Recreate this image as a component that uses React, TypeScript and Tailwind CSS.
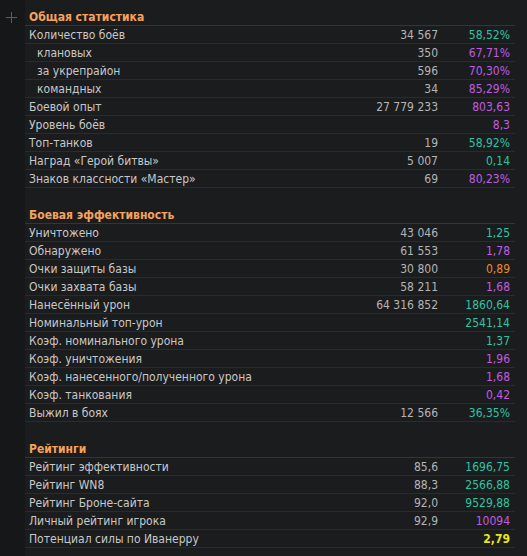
type Tone = "teal" | "purple" | "orange" | "yellow";

type Row = {
  label: string;
  value?: string;
  rate: string;
  tone: Tone;
  sub?: boolean;
};

type Section = {
  title: string;
  rows: Row[];
};

const sections: Section[] = [
  {
    title: "Общая статистика",
    rows: [
      { label: "Количество боёв", value: "34 567", rate: "58,52%", tone: "teal" },
      { label: "клановых", value: "350", rate: "67,71%", tone: "purple", sub: true },
      { label: "за укрепрайон", value: "596", rate: "70,30%", tone: "purple", sub: true },
      { label: "командных", value: "34", rate: "85,29%", tone: "purple", sub: true },
      { label: "Боевой опыт", value: "27 779 233", rate: "803,63", tone: "purple" },
      { label: "Уровень боёв", rate: "8,3", tone: "purple" },
      { label: "Топ-танков", value: "19", rate: "58,92%", tone: "teal" },
      { label: "Наград «Герой битвы»", value: "5 007", rate: "0,14", tone: "teal" },
      { label: "Знаков классности «Мастер»", value: "69", rate: "80,23%", tone: "purple" },
    ],
  },
  {
    title: "Боевая эффективность",
    rows: [
      { label: "Уничтожено", value: "43 046", rate: "1,25", tone: "teal" },
      { label: "Обнаружено", value: "61 553", rate: "1,78", tone: "purple" },
      { label: "Очки защиты базы", value: "30 800", rate: "0,89", tone: "orange" },
      { label: "Очки захвата базы", value: "58 211", rate: "1,68", tone: "purple" },
      { label: "Нанесённый урон", value: "64 316 852", rate: "1860,64", tone: "teal" },
      { label: "Номинальный топ-урон", rate: "2541,14", tone: "teal" },
      { label: "Коэф. номинального урона", rate: "1,37", tone: "teal" },
      { label: "Коэф. уничтожения", rate: "1,96", tone: "purple" },
      { label: "Коэф. нанесенного/полученного урона", rate: "1,68", tone: "purple" },
      { label: "Коэф. танкования", rate: "0,42", tone: "purple" },
      { label: "Выжил в боях", value: "12 566", rate: "36,35%", tone: "teal" },
    ],
  },
  {
    title: "Рейтинги",
    rows: [
      { label: "Рейтинг эффективности", value: "85,6", rate: "1696,75", tone: "teal" },
      { label: "Рейтинг WN8", value: "88,3", rate: "2566,88", tone: "teal" },
      { label: "Рейтинг Броне-сайта", value: "92,0", rate: "9529,88", tone: "teal" },
      { label: "Личный рейтинг игрока", value: "92,9", rate: "10094", tone: "purple" },
      { label: "Потенциал силы по Иванерру", rate: "2,79", tone: "yellow" },
    ],
  },
];

const toneClass: Record<Tone, string> = {
  teal: "text-[#2ec4a2]",
  purple: "text-[#c05ce0]",
  orange: "text-[#f08a24]",
  yellow: "text-[#e8e816] font-bold",
};

const StatRow = ({ row }: { row: Row }) => (
  <div className="grid h-[18px] grid-cols-[1fr_100px_72px] items-center border-b border-[#2a2b2e]">
    <span className={`truncate text-[#c8c8c8] ${row.sub ? "pl-3" : "pl-1"}`}>{row.label}</span>
    <span className="pr-[5px] text-right text-[#b4b4b4]">{row.value ?? ""}</span>
    <span className={`pr-[5px] text-right ${toneClass[row.tone]}`}>{row.rate}</span>
  </div>
);

export default function App() {
  return (
    <div
      className="flex min-h-[556px] w-[527px] bg-[#1b1c1e] text-[12px] leading-[18px]"
      style={{ fontFamily: '"DejaVu Sans Condensed", "DejaVu Sans", sans-serif' }}
    >
      <div className="w-[25px] shrink-0 bg-[#161719] pt-[8px]">
        <div className="flex h-[18px] items-center justify-center pr-[3px]">
          <svg width="11" height="11" viewBox="0 0 11 11" className="text-[#5c5d60]">
            <path d="M5.5 0v11M0 5.5h11" stroke="currentColor" strokeWidth="1" />
          </svg>
        </div>
      </div>

      <div className="w-[490px] pt-[8px]">
        {sections.map((section, i) => (
          <div key={section.title} className={i > 0 ? "mt-[18px]" : ""}>
            <div className="h-[18px] border-b border-[#34353a] pl-1 font-bold text-[#f5a25a]">
              {section.title}
            </div>
            {section.rows.map((row) => (
              <StatRow key={row.label} row={row} />
            ))}
          </div>
        ))}
      </div>
    </div>
  );
}
